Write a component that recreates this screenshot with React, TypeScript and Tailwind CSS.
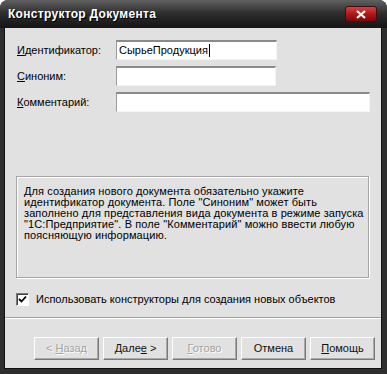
import React from 'react';

const font = { fontFamily: '"Liberation Sans", Arial, sans-serif' };

const helpLines = [
	'Для создания нового документа обязательно укажите',
	'идентификатор документа. Поле "Синоним" может быть',
	'заполнено для представления вида документа в режиме запуска',
	'"1С:Предприятие". В поле "Комментарий" можно ввести любую',
	'поясняющую информацию.',
];

function Field({ label, mnemonic, width, value }: { label: string; mnemonic: string; width: string; value?: string }) {
	return (
		<div className="flex items-center h-[20px]">
			<label className="w-[111px] shrink-0 pl-[12px] text-[11px] text-black leading-none">
				<span className="underline underline-offset-1">{mnemonic}</span>
				{label}
			</label>
			<div
				className={`${width} h-[20px] bg-white border-t-2 border-l border-t-[#8a8a8a] border-l-[#9a9a9a] border-r border-b border-r-[#f4f4f4] border-b-[#f4f4f4] flex items-center pl-[2px] text-[11px] text-black`}
			>
				{value}
				{value && <span className="inline-block w-px h-[13px] bg-black ml-px" />}
			</div>
		</div>
	);
}

function WizButton({ children, disabled }: { children: React.ReactNode; disabled?: boolean }) {
	return (
		<button
			className={`w-[65px] h-[23px] bg-[#e1e1e1] border border-t-white border-l-white border-r-[#7a7a7a] border-b-[#7a7a7a] shadow-[inset_-1px_-1px_0_#a8a8a8] text-[11px] font-normal leading-none ${
				disabled ? 'text-[#a2a2a2] [text-shadow:1px_1px_0_#ffffff]' : 'text-[#111]'
			}`}
		>
			{children}
		</button>
	);
}

export default function App() {
	return (
		<div className="w-[387px] h-[374px] bg-[#2e2e2e] rounded-t-[8px] flex flex-col overflow-hidden" style={font}>
			{/* title bar */}
			<div className="h-[28px] flex items-center justify-between pl-[8px] pr-[10px] bg-gradient-to-b from-[#606060] via-[#2c2c2c] to-[#151515]">
				<span className="text-white font-bold text-[12px] tracking-[0.3px] [text-shadow:1px_1px_0_#000]">
					Конструктор Документа
				</span>
				<div className="w-[32px] h-[16px] rounded-[3px] border border-[#3a1010] bg-gradient-to-b from-[#d84040] via-[#b01818] to-[#7e0808] flex items-center justify-center">
					<svg width="10" height="9" viewBox="0 0 10 9">
						<path d="M1 1 L9 8 M9 1 L1 8" stroke="white" strokeWidth="2.2" />
					</svg>
				</div>
			</div>

			{/* body */}
			<div className="flex-1 ml-[4px] mr-[5px] mb-[5px] bg-[#e1e1e1] border-l border-r border-b border-[#111] flex flex-col">
				<div className="pt-[12px] flex flex-col gap-[6px]">
					<Field mnemonic="И" label="дентификатор:" width="w-[161px]" value="СырьеПродукция" />
					<Field mnemonic="С" label="иноним:" width="w-[160px]" />
					<Field mnemonic="К" label="омментарий:" width="w-[254px]" />
				</div>

				<div className="mt-[64px] ml-[11px] w-[353px] h-[102px] border border-[#a5a5a5] shadow-[inset_1px_1px_0_#ffffff,1px_1px_0_#ffffff] pt-[9px] pl-[7px] text-[11px] leading-[11px] tracking-[0.1px] text-black">
					{helpLines.map((line, i) => (
						<div key={i} className="whitespace-nowrap">
							{line}
						</div>
					))}
				</div>

				<div className="mt-[15px] ml-[11px] flex items-center h-[13px]">
					<div className="w-[13px] h-[13px] bg-white border-t border-l border-[#7a7a7a] border-r border-b border-r-white border-b-white shadow-[inset_1px_1px_0_#404040] flex items-center justify-center">
						<svg width="9" height="9" viewBox="0 0 9 9">
							<path d="M1 4 L3.5 6.5 L8 1.5" stroke="black" strokeWidth="1.8" fill="none" />
						</svg>
					</div>
					<span className="ml-[7px] text-[11px] text-black leading-none">
						Использовать конструкторы для создания новых объектов
					</span>
				</div>

				<div className="mt-[11px] h-[2px] border-t border-[#a0a0a0] border-b border-b-white" />

				<div className="mt-[18px] flex justify-end gap-[4px] pr-[6px]">
					<WizButton disabled>
						&lt; <span className="underline underline-offset-1">Н</span>азад
					</WizButton>
					<WizButton>
						Дале<span className="underline underline-offset-1">е</span> &gt;
					</WizButton>
					<WizButton disabled>
						<span className="underline underline-offset-1">Г</span>отово
					</WizButton>
					<WizButton>Отмена</WizButton>
					<WizButton>
						<span className="underline underline-offset-1">П</span>омощь
					</WizButton>
				</div>
			</div>
		</div>
	);
}
